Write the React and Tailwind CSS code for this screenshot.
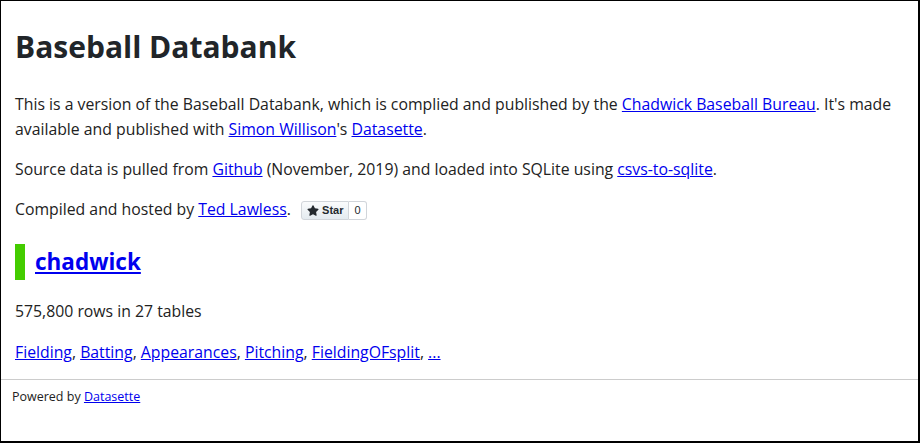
const LINKS = ['Fielding', 'Batting', 'Appearances', 'Pitching', 'FieldingOFsplit'];

function A({ children, className = '' }) {
  return <a href="#" className={`text-[#0000ee] underline ${className}`}>{children}</a>;
}

function StarButton() {
  return (
    <span className="inline-flex items-stretch align-middle ml-[6px] h-[19px] text-[11px] leading-none" style={{ fontFamily: '"Liberation Sans", sans-serif' }}>
      <span className="flex items-center gap-[3px] px-[5px] border border-[#d1d5da] rounded-l-[3px] bg-gradient-to-b from-[#fafbfc] to-[#e4ebf0] text-[#24292e] font-bold">
        <svg width="12" height="12" viewBox="0 0 16 16" fill="currentColor">
          <path d="M8 .25a.75.75 0 0 1 .673.418l1.882 3.815 4.21.612a.75.75 0 0 1 .416 1.279l-3.046 2.97.719 4.192a.75.75 0 0 1-1.088.791L8 12.347l-3.766 1.98a.75.75 0 0 1-1.088-.79l.72-4.194L.818 6.374a.75.75 0 0 1 .416-1.28l4.21-.611L7.327.668A.75.75 0 0 1 8 .25Z" />
        </svg>
        Star
      </span>
      <span className="flex items-center px-[5px] border border-l-0 border-[#d1d5da] rounded-r-[3px] bg-white text-[#24292e]">0</span>
    </span>
  );
}

export default function App() {
  return (
    <div className="w-[920px] h-[443px] border-l border-t border-r-2 border-b-2 border-black bg-white text-[#222] flex flex-col overflow-hidden"
      style={{ fontFamily: '"Open Sans", "Noto Sans", sans-serif' }}>
      <div className="px-[14px] pt-[22px]">
        <h1 className="text-[30px] font-bold leading-[48px] mb-[21px] text-[#212529]">Baseball Databank</h1>
        <p className="text-[15.8px] leading-[25px] mb-[15px]">
          This is a version of the Baseball Databank, which is complied and published by the <A>Chadwick Baseball Bureau</A>. It's made available and published with <A>Simon Willison</A>'s <A>Datasette</A>.
        </p>
        <p className="text-[15.8px] leading-[25px] mb-[15px]">
          Source data is pulled from <A>Github</A> (November, 2019) and loaded into SQLite using <A>csvs-to-sqlite</A>.
        </p>
        <p className="text-[15.8px] leading-[25px] mb-[22px]">
          Compiled and hosted by <A>Ted Lawless</A>. <StarButton />
        </p>
        <h2 className="border-l-[10px] border-[#44cc00] pl-[10px] text-[22.5px] font-bold leading-[36px] mb-[19px]">
          <A>chadwick</A>
        </h2>
        <p className="text-[15.8px] leading-[25px] mb-[16px]">575,800 rows in 27 tables</p>
        <p className="text-[15.8px] leading-[25px]">
          {LINKS.map(l => (
            <span key={l}><A>{l}</A>, </span>
          ))}
          <A>...</A>
        </p>
      </div>
      <div className="mt-[14px] border-t border-[#ccc] px-[11px] pt-[8px] text-[12.5px] leading-[18px]">
        Powered by <A>Datasette</A>
      </div>
    </div>
  );
}
